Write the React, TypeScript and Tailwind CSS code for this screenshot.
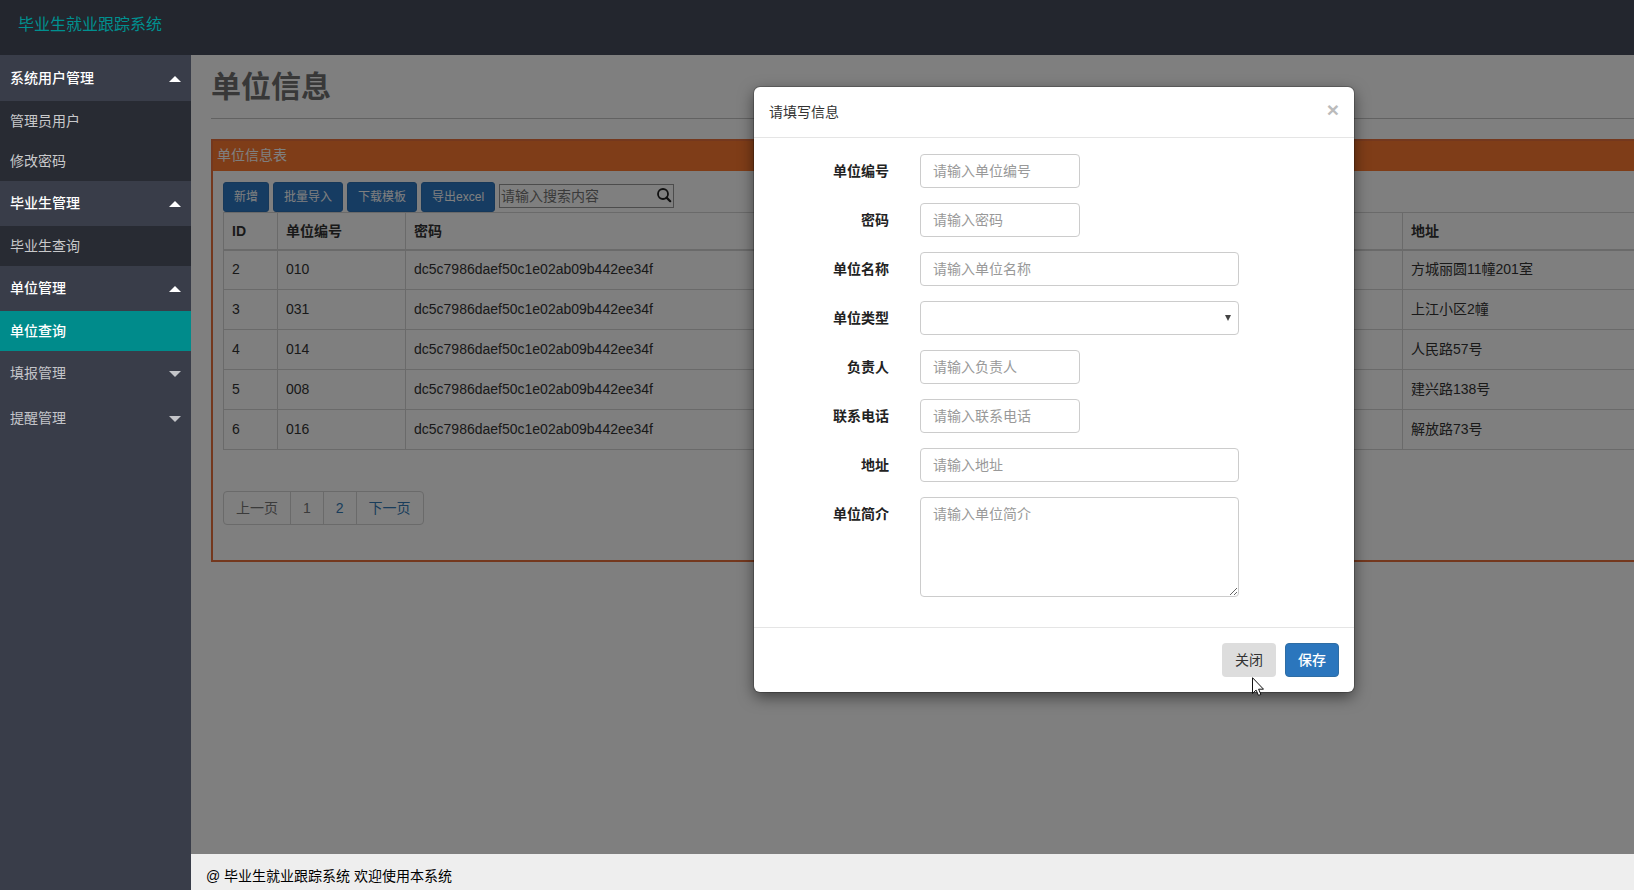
import { useState } from "react";
import clsx from "clsx";

interface MenuGroup {
  title: string;
  open: boolean;
  children: string[];
}

interface Company {
  id: number;
  code: string;
  password: string;
  address: string;
}

interface FieldProps {
  id: string;
  label: string;
  placeholder?: string;
  type?: "text" | "select" | "textarea";
  short?: boolean;
}

const SYSTEM_NAME = "毕业生就业跟踪系统";

const menu: MenuGroup[] = [
  { title: "系统用户管理", open: true, children: ["管理员用户", "修改密码"] },
  { title: "毕业生管理", open: true, children: ["毕业生查询"] },
  { title: "单位管理", open: true, children: ["单位查询"] },
  { title: "填报管理", open: false, children: [] },
  { title: "提醒管理", open: false, children: [] },
];

const companies: Company[] = [
  { id: 2, code: "010", password: "dc5c7986daef50c1e02ab09b442ee34f", address: "方城丽圆11幢201室" },
  { id: 3, code: "031", password: "dc5c7986daef50c1e02ab09b442ee34f", address: "上江小区2幢" },
  { id: 4, code: "014", password: "dc5c7986daef50c1e02ab09b442ee34f", address: "人民路57号" },
  { id: 5, code: "008", password: "dc5c7986daef50c1e02ab09b442ee34f", address: "建兴路138号" },
  { id: 6, code: "016", password: "dc5c7986daef50c1e02ab09b442ee34f", address: "解放路73号" },
];

const fields: FieldProps[] = [
  { id: "code", label: "单位编号", placeholder: "请输入单位编号", short: true },
  { id: "password", label: "密码", placeholder: "请输入密码", short: true },
  { id: "name", label: "单位名称", placeholder: "请输入单位名称" },
  { id: "type", label: "单位类型", type: "select" },
  { id: "leader", label: "负责人", placeholder: "请输入负责人", short: true },
  { id: "phone", label: "联系电话", placeholder: "请输入联系电话", short: true },
  { id: "address", label: "地址", placeholder: "请输入地址" },
  { id: "intro", label: "单位简介", placeholder: "请输入单位简介", type: "textarea" },
];

const Sidebar = () => {
  const [active, setActive] = useState("单位查询");

  return (
    <nav className="w-[191px] shrink-0 bg-[#393d49] pt-px">
      {menu.map((group) => (
        <div key={group.title}>
          <button
            className={clsx(
              "flex h-[45px] w-full items-center justify-between px-2.5 pb-0.5 text-left",
              group.open ? "font-medium text-white" : "text-[#c4c5c9]"
            )}
          >
            {group.title}
            <svg className="mt-0.5" width="12" height="6" viewBox="0 0 12 6" fill="currentColor">
              <path d={group.open ? "M6 0L12 6H0Z" : "M0 0H12L6 6Z"} />
            </svg>
          </button>
          {group.children.map((item) => (
            <a
              key={item}
              href="#"
              onClick={() => setActive(item)}
              className={clsx(
                "block h-10 pl-2.5 leading-10",
                item === active ? "bg-[#008b8b] font-medium text-white" : "bg-[#282b33] text-[#c8c9cb]"
              )}
            >
              {item}
            </a>
          ))}
        </div>
      ))}
    </nav>
  );
};

const Toolbar = () => (
  <div className="flex items-center gap-1">
    {["新增", "批量导入", "下载模板", "导出excel"].map((text) => (
      <button
        key={text}
        className="h-[30px] rounded-[3px] border border-[#2c70b4] bg-[#2c78c4] px-2.5 text-xs text-white"
      >
        {text}
      </button>
    ))}
    <div className="relative mb-0.5">
      <input
        aria-label="搜索"
        placeholder="请输入搜索内容"
        className="h-6 w-[175px] border border-[#999] bg-white px-px placeholder:text-[#757575]"
      />
      <svg className="absolute top-1 right-0.5" width="15" height="15" viewBox="0 0 15 15" fill="none" stroke="#222">
        <circle cx="6" cy="6" r="5" strokeWidth="1.8" />
        <path d="M9.6 9.6L13.2 13.2" strokeWidth="2.2" strokeLinecap="round" />
      </svg>
    </div>
  </div>
);

const CompanyTable = () => (
  <table className="w-full table-fixed border-collapse border border-[#d4d4d4] text-left text-[#333]">
    <colgroup>
      <col className="w-[54px]" />
      <col className="w-32" />
      <col className="w-[997px]" />
      <col />
    </colgroup>
    <thead>
      <tr className="h-[37px]">
        {["ID", "单位编号", "密码", "地址"].map((name) => (
          <th key={name} className="border border-b-2 border-[#d4d4d4] px-2 font-bold">{name}</th>
        ))}
      </tr>
    </thead>
    <tbody>
      {companies.map((c) => (
        <tr key={c.id} className="h-10">
          <td className="border border-[#d4d4d4] px-2 pb-px">{c.id}</td>
          <td className="border border-[#d4d4d4] px-2 pb-px">{c.code}</td>
          <td className="border border-[#d4d4d4] px-2 pb-px">{c.password}</td>
          <td className="border border-[#d4d4d4] px-2 pb-px">{c.address}</td>
        </tr>
      ))}
    </tbody>
  </table>
);

const Pagination = () => (
  <div className="mt-[41px] flex w-fit divide-x divide-[#d4d4d4] rounded border border-[#d4d4d4] leading-8">
    <a href="#" className="px-3 text-[#777]">上一页</a>
    <a href="#" className="px-3 text-[#777]">1</a>
    <a href="#" className="px-3 text-[#337ab7]">2</a>
    <a href="#" className="px-3 text-[#337ab7]">下一页</a>
  </div>
);

const control = "w-full rounded border border-[#ccc] bg-white px-3 text-[#555] placeholder:text-[#999]";

const Field = ({ id, label, placeholder, type = "text", short }: FieldProps) => (
  <div className="flex gap-[31px]">
    <label htmlFor={id} className="w-[120px] text-right leading-[34px] font-bold text-[#222]">{label}</label>
    <div className={clsx("relative flex", short ? "w-40" : "w-[319px]")}>
      {type === "text" && <input id={id} placeholder={placeholder} className={clsx(control, "h-[34px]")} />}
      {type === "select" && (
        <>
          <select id={id} className={clsx(control, "h-[34px] appearance-none")} />
          <svg className="pointer-events-none absolute top-3.5 right-2" width="6" height="6" viewBox="0 0 6 6">
            <path d="M0 0H6L3 6Z" fill="#444" />
          </svg>
        </>
      )}
      {type === "textarea" && (
        <textarea id={id} placeholder={placeholder} className={clsx(control, "h-[100px] py-1.5 leading-5")} />
      )}
    </div>
  </div>
);

const CompanyDialog = () => (
  <div
    role="dialog"
    aria-labelledby="dialog-title"
    className="mt-8 h-fit w-[600px] rounded-md bg-white shadow-[0_0_0_1px_rgba(0,0,0,0.2),0_5px_15px_rgba(0,0,0,0.5)]"
  >
    <div className="flex h-[51px] items-center justify-between border-b border-[#e5e5e5] px-[15px]">
      <h4 id="dialog-title" className="text-[#333]">请填写信息</h4>
      <button aria-label="关闭" className="pb-1 text-[21px] leading-5 font-bold text-[#bbb]">×</button>
    </div>
    <form className="flex flex-col gap-[15px] px-[15px] pt-4 pb-[30px]">
      {fields.map((field) => (
        <Field key={field.id} {...field} />
      ))}
    </form>
    <div className="flex justify-end gap-[9px] border-t border-[#e5e5e5] p-[15px]">
      <div className="relative">
        <button className="h-[34px] rounded bg-[#ddd] px-[13px] text-[#333]">关闭</button>
        <svg className="pointer-events-none absolute top-full left-[30px]" width="12" height="19" viewBox="0 0 12 19">
          <path
            d="M0.5 0.7V16.5L4.1 13.1L6.5 18.4L8.9 17.4L6.6 12.2H11.5Z"
            fill="#fff"
            stroke="#111"
            strokeLinejoin="round"
          />
        </svg>
      </div>
      <button className="h-[34px] rounded border border-[#2e6da4] bg-[#2b76bd] px-3 font-medium text-white">保存</button>
    </div>
  </div>
);

export default function App() {
  return (
    <div className="flex min-h-screen flex-col overflow-hidden font-['Liberation_Sans','Noto_Sans_CJK_SC',sans-serif] text-sm leading-5">
      <header className="h-[55px] bg-[#23262e] px-[18px] text-base leading-[50px] text-[#009090]">{SYSTEM_NAME}</header>
      <div className="flex grow">
        <Sidebar />
        <div className="flex min-w-0 grow flex-col">
          <main className="relative grow overflow-hidden bg-white">
            {/* the list keeps its desktop width and runs out of the frame */}
            <div className="min-w-[1726px] px-5">
              <h1 className="border-b border-[#c4c4c4] pt-[15px] pb-[15px] text-[30px] leading-[33px] font-bold text-[#707070]">
                单位信息
              </h1>
              <section className="mt-5 border-2 border-[#e8703c]">
                <h2 className="h-[30px] bg-[#ff7a30] px-1 leading-7 text-white">单位信息表</h2>
                <div className="px-2.5 pt-[11px] pb-[35px]">
                  <Toolbar />
                  <CompanyTable />
                  <Pagination />
                </div>
              </section>
            </div>
            <div className="absolute inset-y-0 left-0 flex w-full min-w-[1726px] justify-center bg-black/50">
              <CompanyDialog />
            </div>
          </main>
          <footer className="h-9 bg-[#eee] px-[15px] leading-[44px] text-black">@ {SYSTEM_NAME} 欢迎使用本系统</footer>
        </div>
      </div>
    </div>
  );
}
